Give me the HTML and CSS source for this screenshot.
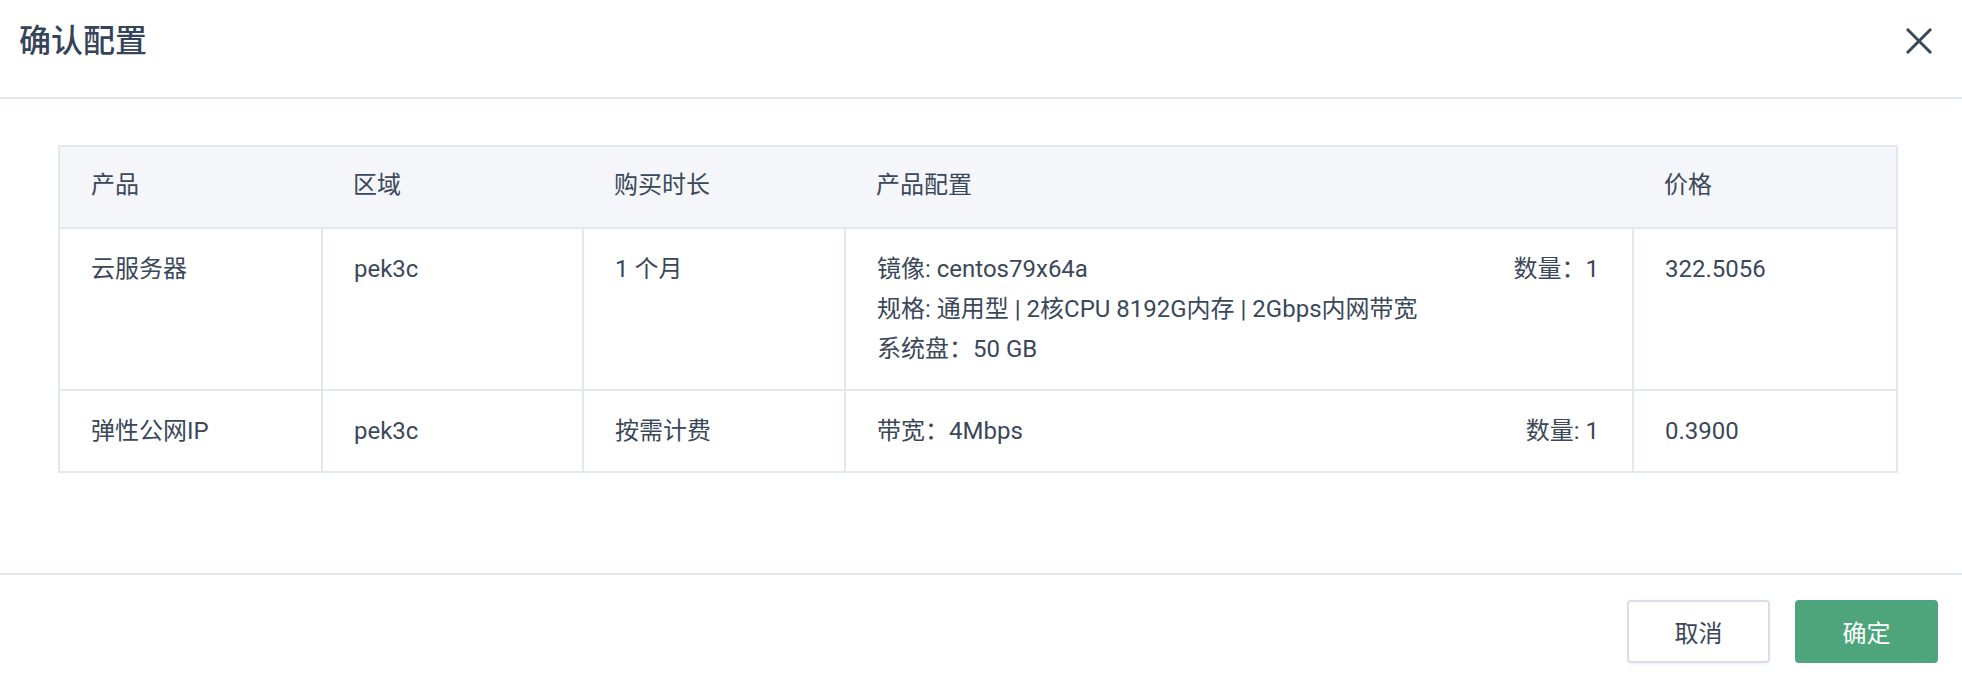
FILE: index.html
```html
<!DOCTYPE html>
<html lang="zh-CN">
<head>
<meta charset="utf-8">
<title>确认配置</title>
<link rel="stylesheet" href="styles.css">
</head>
<body>
<div class="dialog">
  <div class="dlg-header">
    <div class="dlg-title">确认配置</div>
    <button class="dlg-close" aria-label="关闭">
      <svg width="26" height="26" viewBox="0 0 26 26"><path d="M2 2 L24 24 M24 2 L2 24" stroke="#3b4859" stroke-width="3" stroke-linecap="square" fill="none"/></svg>
    </button>
  </div>
  <div class="dlg-body">
    <table class="cfg-table">
      <colgroup>
        <col class="c1"><col class="c2"><col class="c3"><col class="c4"><col class="c5">
      </colgroup>
      <thead>
        <tr><th>产品</th><th>区域</th><th>购买时长</th><th>产品配置</th><th>价格</th></tr>
      </thead>
      <tbody>
        <tr>
          <td>云服务器</td>
          <td>pek3c</td>
          <td>1 个月</td>
          <td>
            <div class="cfg">
              <div class="cfg-lines">
                <div>镜像: centos79x64a</div>
                <div>规格: 通用型 | 2核CPU 8192G内存 | 2Gbps内网带宽</div>
                <div>系统盘：50 GB</div>
              </div>
              <div class="qty">数量：1</div>
            </div>
          </td>
          <td>322.5056</td>
        </tr>
        <tr>
          <td>弹性公网IP</td>
          <td>pek3c</td>
          <td>按需计费</td>
          <td>
            <div class="cfg">
              <div class="cfg-lines"><div>带宽：4Mbps</div></div>
              <div class="qty">数量: 1</div>
            </div>
          </td>
          <td>0.3900</td>
        </tr>
      </tbody>
    </table>
  </div>
  <div class="dlg-footer">
    <button class="btn btn-default">取消</button>
    <button class="btn btn-primary">确定</button>
  </div>
</div>
</body>
</html>
```

FILE: styles.css
```css
* { box-sizing: border-box; }
html, body { margin: 0; padding: 0; background: #fff; }
body {
  font-family: Roboto, "Noto Sans CJK SC", "Noto Sans", sans-serif;
  color: #3b4859;
  font-size: 24px;
}
.dialog { width: 1962px; height: 674px; display: flex; flex-direction: column; }
.dlg-header {
  height: 99px;
  border-bottom: 2px solid #e3e8ef;
  display: flex;
  align-items: center;
  justify-content: space-between;
  padding: 0 30px 16px 19px;
}
.dlg-title {
  font-size: 32px;
  font-weight: 500;
  color: #36445a;
  line-height: 40px;
}
.dlg-close {
  border: 0;
  background: transparent;
  padding: 0;
  width: 26px;
  height: 26px;
  display: flex;
}
.dlg-body { padding: 46px 66px 100px 58px; }
.cfg-table {
  width: 1838px;
  border-collapse: collapse;
  table-layout: fixed;
  border: 2px solid #e3e8ef;
}
.c1 { width: 263px; }
.c2 { width: 261px; }
.c3 { width: 262px; }
.c4 { width: 788px; }
.c5 { width: 264px; }
.cfg-table th {
  background: #f4f6f9;
  font-weight: 400;
  text-align: left;
  padding: 18px 31px 22px;
  line-height: 40px;
  border-bottom: 2px solid #e3e8ef;
}
.cfg-table td {
  vertical-align: top;
  padding: 20px 31px;
  line-height: 40px;
  border: 2px solid #e3e8ef;
}
.cfg { display: flex; justify-content: space-between; }
.qty { white-space: nowrap; padding-right: 2px; }
.dlg-footer {
  border-top: 2px solid #e3e8ef;
  display: flex;
  justify-content: flex-end;
  gap: 25px;
  padding: 25px 24px 0 0;
}
.btn {
  width: 143px;
  height: 63px;
  border-radius: 4px;
  font-family: Roboto, "Noto Sans CJK SC", sans-serif;
  font-size: 24px;
  cursor: pointer;
}
.btn-default {
  background: #fff;
  border: 2px solid #d8dfe8;
  color: #3b4859;
  box-shadow: 0 1px 3px rgba(60, 80, 110, 0.08);
}
.btn-primary {
  background: #4ea57b;
  border: 0;
  color: #fff;
}
```
